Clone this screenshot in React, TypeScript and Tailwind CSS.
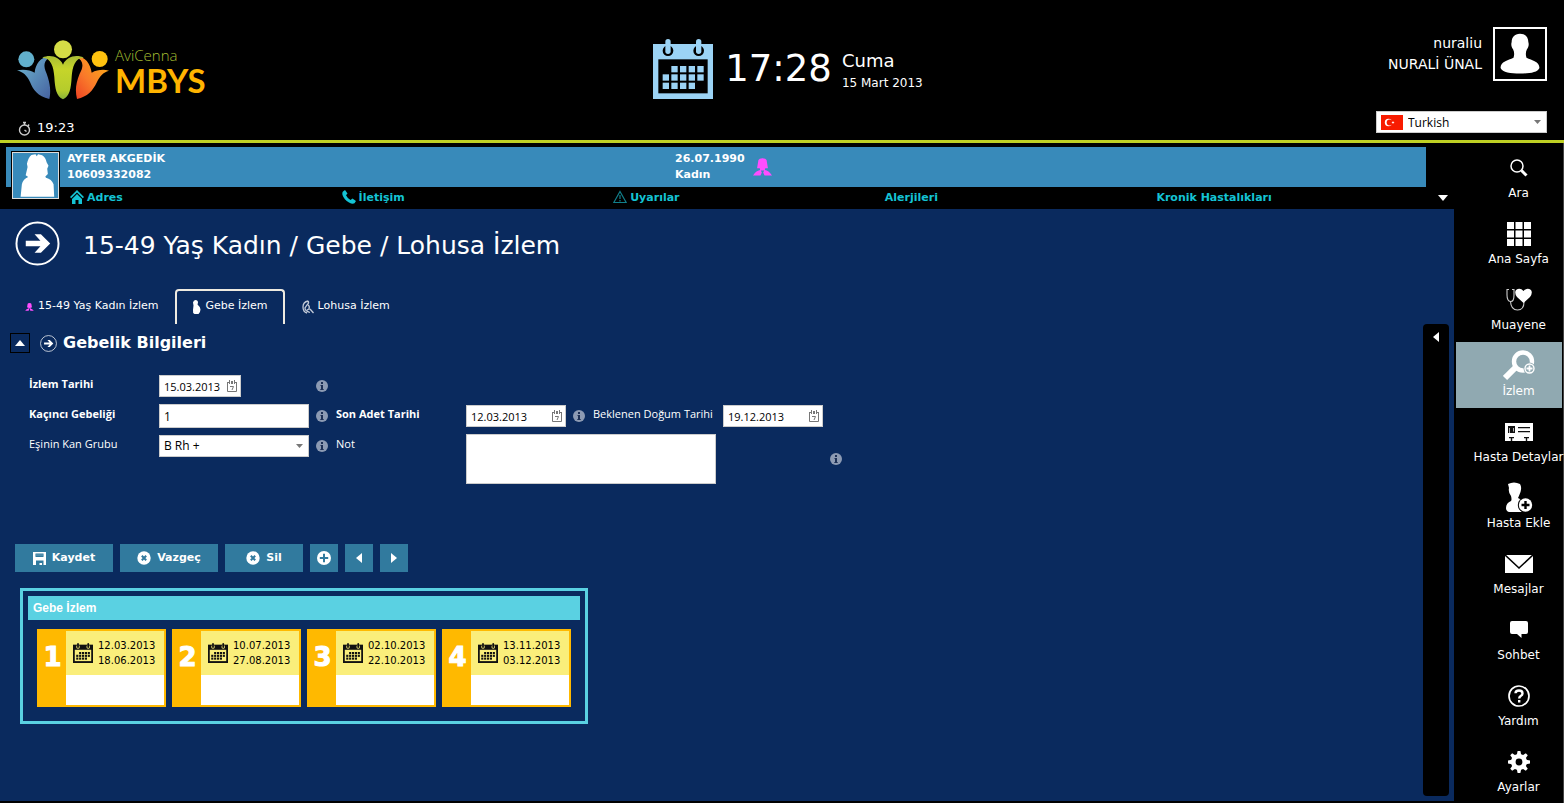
import React from 'react';

type IconProps = { className?: string };

function CalendarIcon({ fg, bg, className }: { fg: string; bg: string; className?: string }) {
  const rows = [
    [127, 153, 179, 205],
    [101, 127, 153, 179, 205],
    [101, 127, 153, 179],
  ];
  return (
    <svg viewBox="72 57 180 180" className={className} aria-hidden="true">
      <rect x="72" y="72" width="180" height="165" fill={fg} />
      <rect x="88" y="118" width="148" height="102" fill={bg} />
      {[117, 209].map((x) => (
        <g key={x}>
          <circle cx={x} cy="92" r="16" fill={bg} />
          <rect x={x - 8} y="57" width="16" height="45" rx="8" fill={fg} />
        </g>
      ))}
      {rows.map((xs, r) =>
        xs.map((x) => <rect key={`${r}-${x}`} x={x} y={138 + r * 25} width="19" height="19" fill={fg} />),
      )}
    </svg>
  );
}

function LogoMark() {
  return (
    <svg viewBox="50 60 276 178" className="h-[60px] w-[92px]" aria-hidden="true">
      <defs>
        <linearGradient id="lb" x1="0" y1="0" x2="1" y2="1">
          <stop offset="0" stopColor="#6fb9d2" />
          <stop offset="1" stopColor="#4662a0" />
        </linearGradient>
        <linearGradient id="lg" x1="0" y1="0" x2="0" y2="1">
          <stop offset="0" stopColor="#a9bd35" />
          <stop offset=".3" stopColor="#c6d52a" />
          <stop offset=".8" stopColor="#b5cc2c" />
          <stop offset="1" stopColor="#86b23a" />
        </linearGradient>
        <linearGradient id="lo" x1="1" y1="0" x2="0" y2="1">
          <stop offset="0" stopColor="#fdb515" />
          <stop offset=".6" stopColor="#f9792a" />
          <stop offset="1" stopColor="#ee4223" />
        </linearGradient>
      </defs>
      <path d="M50 150C70 146 90 149 103 157 105 130 122 107 150 109 130 122 128 135 139 160 150 190 152 215 147 236 112 228 98 208 89 185 81 166 68 155 50 150Z" fill="url(#lb)" />
      <path d="M228 109C252 107 270 128 274 157 290 149 308 146 326 151 308 156 298 168 290 185 277 212 262 229 230 236 224 210 226 190 238 160 252 135 248 120 228 109Z" fill="url(#lo)" />
      <path d="M126 112C150 101 178 110 188 133 198 110 226 101 250 112 224 112 216 140 214 170 212 205 208 228 188 237 168 228 164 205 162 170 160 140 152 112 126 112Z" fill="url(#lg)" />
      <circle cx="78" cy="117" r="24" fill="#62b0cc" />
      <circle cx="188" cy="87" r="27" fill="#d5dc46" />
      <circle cx="298" cy="116" r="24" fill="#ffc20f" />
    </svg>
  );
}

function WomanIcon({ className }: IconProps) {
  return (
    <svg viewBox="0 0 56 52" className={className} fill="#ff4dff" aria-hidden="true">
      <path d="M16 5Q18 0 28 0T40 5L44 30H36L35 35Q46 36 56 51H34L30 42 33 36H23L26 42 22 51H0Q8 38 21 35L20 30H12Z" />
    </svg>
  );
}

function ArrowCircle({ className, thin }: IconProps & { thin?: boolean }) {
  return (
    <svg viewBox="0 0 46 46" className={className} aria-hidden="true">
      <circle cx="23" cy="23" r="21.5" fill="none" stroke="#fff" strokeWidth={thin ? 2.6 : 2} opacity={thin ? 0.75 : 1} />
      <path d="M11 20.300H26L20 13.500H26.500L36 23 26.500 32.500H20L26 25.700H11Z" fill="#fff" />
    </svg>
  );
}

function InfoIcon() {
  return (
    <svg viewBox="0 0 12 12" className="size-3" role="img" aria-label="Bilgi">
      <circle cx="6" cy="6" r="6" fill="#8c9ab3" />
      <path d="M5 2h2v2H5zM4.500 5H7v4h.7v1H4.300V9H5V6h-.5z" fill="#1c2f55" />
    </svg>
  );
}

function Triangle({ dir, className }: { dir: 'left' | 'right' | 'up' | 'down'; className?: string }) {
  const d = {
    left: 'M10 0V12L0 6Z',
    right: 'M0 0V12L10 6Z',
    up: 'M0 10H12L6 0Z',
    down: 'M0 0H12L6 10Z',
  }[dir];
  const box = dir === 'left' || dir === 'right' ? '0 0 10 12' : '0 0 12 10';
  return (
    <svg viewBox={box} preserveAspectRatio="none" className={className} fill="currentColor" aria-hidden="true">
      <path d={d} />
    </svg>
  );
}

function DatePickerIcon({ className }: IconProps) {
  return (
    <svg viewBox="0 0 10 12" className={className} fill="none" stroke="#777" aria-hidden="true">
      <path d="M0 2.500H2M8 2.500H10M.5 2.500V11.500H9.500V2.500M2.500 0V4M7.500 0V4M4.500 1V4M5.500 1V4M3 6.500H6.500L5 10" />
    </svg>
  );
}

function XCircle() {
  return (
    <svg viewBox="0 0 14 14" className="size-[14px]" aria-hidden="true">
      <circle cx="7" cy="7" r="6.7" fill="#fff" />
      <path d="M4.800 4.800l4.400 4.400M9.200 4.800L4.800 9.200" stroke="#317a9e" strokeWidth="2" />
    </svg>
  );
}

function Header() {
  return (
    <header className="border-b-[3px] border-[#bfd124] pt-[27px]">
      <div className="grid h-[84px] grid-cols-[1fr_auto_1fr] items-start px-[17px]">
        <div className="flex pt-[13px]">
          <LogoMark />
          <div className="flex flex-col pl-[6px] pt-[5px]">
            <span className="font-['Open_Sans',sans-serif] text-[15px] font-light leading-[20px] text-[#a3bd31]">AviCenna</span>
            <span className="font-['Lato',sans-serif] text-[33px] font-bold leading-[30px] text-[#ffb400]">MBYS</span>
          </div>
        </div>
        <div className="flex items-center pl-3 pt-[12px]">
          <CalendarIcon fg="#9bd3f5" bg="#000" className="size-[60px]" />
          <time className="pl-3 text-[37px] leading-[60px]">17:28</time>
          <div className="flex flex-col pl-[10px] pt-[6px]">
            <span className="text-[18px] leading-[22px]">Cuma</span>
            <span className="text-[12px] leading-[22px]">15 Mart 2013</span>
          </div>
        </div>
        <div className="flex justify-end gap-[11px]">
          <div className="flex flex-col pt-[6px] text-right text-[14px] leading-[21px]">
            <span>nuraliu</span>
            <span>NURALİ ÜNAL</span>
          </div>
          <svg viewBox="0 0 54 54" className="size-[54px] border-2 border-white" aria-hidden="true">
            <path d="M27 5C33 5 36 9 36 14 37 17 36 20 34.500 22 33 25 33 28 34 31 40 34 48 35 48 42 46 47 37 48 27 48S8 47 6 42C6 35 14 34 20 31 21 28 21 25 19.500 22 18 20 17 17 18 14 18 9 21 5 27 5Z" fill="#fff" />
          </svg>
        </div>
      </div>
      <div className="flex h-[29px] items-start justify-between px-[17px]">
        <div className="flex items-center gap-[5px] pt-[7px] text-[13px] leading-[20px]">
          <svg viewBox="0 0 15 15" className="size-[15px]" fill="none" stroke="#ccc" aria-hidden="true">
            <circle cx="7.500" cy="9" r="5" strokeWidth="1.400" />
            <path d="M7.500 1V4M6 1.500H9M12 3.500L11 5M7.500 9L9.500 10.500" strokeWidth="1.500" />
          </svg>
          <span>19:23</span>
        </div>
        <div className="relative flex h-[22px] w-[171px] items-center border border-[#ccc] bg-white pl-1">
          <svg viewBox="0 0 22 15" className="h-[15px] w-[22px]" aria-hidden="true">
            <rect width="22" height="15" fill="#f81b00" />
            <circle cx="7.500" cy="7.500" r="3.700" fill="#fff" />
            <circle cx="8.700" cy="7.500" r="3" fill="#f81b00" />
            <path d="M10.500 7.500l1-.5.500-1 .5 1 1 .5-1 .5-.5 1-.5-1z" fill="#fff" />
          </svg>
          <select aria-label="Dil" className="flex-1 appearance-none bg-transparent pl-[5px] pt-px font-['Open_Sans',sans-serif] text-[12px] leading-[18px] text-black">
            <option>Turkish</option>
          </select>
          <Triangle dir="down" className="pointer-events-none absolute right-[5px] top-[8px] h-1 w-[7px] text-[#777]" />
        </div>
      </div>
    </header>
  );
}

const infoLinks = [
  {
    label: 'Adres',
    icon: (
      <svg viewBox="0 0 14 14" className="size-[14px]" fill="#14c3d4" aria-hidden="true">
        <path d="M7 0L14 7 12.800 8.200 7 2.500 1.200 8.200 0 7ZM7 4L12 9V14H8.500V10H5.500V14H2V9Z" />
      </svg>
    ),
  },
  {
    label: 'İletişim',
    icon: (
      <svg viewBox="0 0 14 14" className="size-[14px]" fill="#14c3d4" aria-hidden="true">
        <path d="M1 1.500L3 0 5.500 3.500 4 5.300Q5.500 8.500 8.500 10L10.500 8.500 14 11 12.500 13.300Q10.500 14.500 7 12.500 2 9.500.500 5 0 2.500 1 1.500Z" />
      </svg>
    ),
  },
  {
    label: 'Uyarılar',
    icon: (
      <svg viewBox="0 0 14 14" className="size-[14px]" fill="none" stroke="#117f8b" aria-hidden="true">
        <path d="M7 1.500L13.200 12.500H.8ZM7 5V9M7 10V11.500" strokeWidth="1.200" />
      </svg>
    ),
  },
  { label: 'Alerjileri', icon: null },
  { label: 'Kronik Hastalıkları', icon: null },
];

function PatientBar() {
  return (
    <section className="relative bg-black pl-[6px] pt-1 text-[11px] font-bold">
      <div className="mr-7 grid h-10 grid-cols-[608px_1fr] items-center bg-[#388aba] pl-[61px] leading-4">
        <div>
          <p>AYFER AKGEDİK</p>
          <p>10609332082</p>
        </div>
        <div className="flex items-center gap-2">
          <div>
            <p>26.07.1990</p>
            <p>Kadın</p>
          </div>
          <WomanIcon className="h-[18px] w-[19px]" />
        </div>
      </div>
      <div className="absolute left-[11px] top-2 border border-black">
        <svg viewBox="34 397 142 140" className="size-[47px] border border-[#ddd] bg-[#388aba]" aria-hidden="true">
          <path d="M92 402L105 400 109 406 113 400 126 403Q137 410 140 425L146 436 142 446 144 462 136 470 138 474Q156 478 162 495L164 534H58L62 495Q66 478 82 472L74 466 80 440 78 430Q82 410 92 402Z" fill="#fff" />
        </svg>
      </div>
      <div className="flex h-[22px] items-center pl-16">
        <nav className="grid flex-1 grid-cols-5 text-[#14c3d4]">
          {infoLinks.map((l) => (
            <a key={l.label} href="#" className="flex items-center gap-[3px] leading-5 [&>svg]:mb-[2px]">
              {l.icon}
              {l.label}
            </a>
          ))}
        </nav>
        <button type="button" aria-label="Genişlet" className="pl-[10px] pr-[6px]">
          <Triangle dir="down" className="h-[6px] w-[10px]" />
        </button>
      </div>
    </section>
  );
}

const tabs = [
  { label: '15-49 Yaş Kadın İzlem', icon: <WomanIcon className="h-2 w-[9px]" /> },
  {
    label: 'Gebe İzlem',
    active: true,
    icon: (
      <svg viewBox="0 0 8 14" className="h-[14px] w-[9px]" fill="#fff" aria-hidden="true">
        <path d="M3 0Q5.500 0 5.500 2.500L5 4.500Q8 7 8 9.500T6 14H2Q0 13 .5 10L1 5.500.5 2.500Q1 0 3 0Z" />
      </svg>
    ),
  },
  {
    label: 'Lohusa İzlem',
    icon: (
      <svg viewBox="0 0 12 14" className="h-[14px] w-3" fill="none" stroke="#c2cad8" aria-hidden="true">
        <path d="M6 1Q1 2 1 7T5 13M6 1Q7.500 3 5 5L3 8Q3 11 8 12.500M6 5Q8 6 7 9L5 10M8 9L11.500 13" strokeWidth="1.300" />
      </svg>
    ),
  },
];

const labelBase = 'pb-[5px] leading-4';
const fieldBox = "border border-[#ccc] bg-white font-['Open_Sans',sans-serif] text-black";

function DateField({ id, value, wide }: { id: string; value: string; wide?: boolean }) {
  return (
    <div className={wide ? 'relative w-[100px]' : 'relative w-[82px]'}>
      <input id={id} defaultValue={value} className={`block h-[22px] w-full pl-1 text-[11px] ${fieldBox}`} />
      <DatePickerIcon className="pointer-events-none absolute right-1 top-[5px] h-3 w-[10px]" />
    </div>
  );
}

function FormGrid() {
  return (
    <form className="grid grid-cols-[130px_150px_27px_130px_100px_27px_130px_100px_27px] grid-rows-[30px_30px_30px_26px] items-center pl-[29px] pt-[17px] font-['Open_Sans',sans-serif] text-[11px]">
      <label htmlFor="izlem" className={`${labelBase} font-bold`}>İzlem Tarihi</label>
      <DateField id="izlem" value="15.03.2013" />
      <div className="col-span-7 pl-[7px]"><InfoIcon /></div>

      <label htmlFor="gebelik" className={`${labelBase} font-bold`}>Kaçıncı Gebeliği</label>
      <input id="gebelik" defaultValue="1" className={`h-6 w-full pl-1 text-[12px] ${fieldBox}`} />
      <div className="pl-[7px]"><InfoIcon /></div>
      <label htmlFor="adet" className={`${labelBase} font-bold`}>Son Adet Tarihi</label>
      <DateField id="adet" value="12.03.2013" wide />
      <div className="pl-[7px]"><InfoIcon /></div>
      <label htmlFor="dogum" className={`${labelBase} whitespace-nowrap`}>Beklenen Doğum Tarihi</label>
      <DateField id="dogum" value="19.12.2013" wide />
      <span />

      <label htmlFor="kan" className={labelBase}>Eşinin Kan Grubu</label>
      <div className="relative">
        <select id="kan" className={`block h-[22px] w-full appearance-none pl-1 text-[12px] ${fieldBox}`}>
          <option>B Rh +</option>
        </select>
        <Triangle dir="down" className="pointer-events-none absolute right-[6px] top-[9px] h-1 w-[7px] text-[#777]" />
      </div>
      <div className="pl-[7px]"><InfoIcon /></div>
      <label htmlFor="not" className={labelBase}>Not</label>
      <textarea id="not" className={`col-span-4 row-span-2 h-[50px] w-[250px] resize-none text-[12px] ${fieldBox}`} />
      <div className="row-span-2 pl-[7px]"><InfoIcon /></div>
    </form>
  );
}

const btn = 'flex h-7 items-center justify-center bg-[#317a9e] text-[11px] font-bold';

function Toolbar() {
  return (
    <div className="flex gap-[7px] pl-[15px] pt-[57px]">
      <button type="button" className={`${btn} w-[98px] gap-[6px]`}>
        <svg viewBox="0 0 13 13" className="size-[13px]" aria-hidden="true">
          <path d="M0 0H13V13H0Z" fill="#fff" />
          <path d="M2.500 1.500H10.500V5H2.500ZM3 8.500H10.500V13H9V11H6.500V13H3Z" fill="#317a9e" />
          <path d="M2.500 2.500H10.500V3.500H2.500Z" fill="#6ba0ba" />
        </svg>
        Kaydet
      </button>
      <button type="button" className={`${btn} w-[98px] gap-[6px]`}><XCircle />Vazgeç</button>
      <button type="button" className={`${btn} w-[78px] gap-[6px]`}><XCircle />Sil</button>
      <button type="button" aria-label="Ekle" className={`${btn} w-7`}>
        <svg viewBox="0 0 14 14" className="size-[14px]" aria-hidden="true">
          <circle cx="7" cy="7" r="7" fill="#fff" />
          <path d="M7 2.800V11.200M2.800 7H11.200" stroke="#317a9e" strokeWidth="2" />
        </svg>
      </button>
      <button type="button" aria-label="Önceki" className={`${btn} w-7`}><Triangle dir="left" className="h-[10px] w-[6px]" /></button>
      <button type="button" aria-label="Sonraki" className={`${btn} w-7`}><Triangle dir="right" className="h-[10px] w-[6px]" /></button>
    </div>
  );
}

const visits = [
  ['12.03.2013', '18.06.2013'],
  ['10.07.2013', '27.08.2013'],
  ['02.10.2013', '22.10.2013'],
  ['13.11.2013', '03.12.2013'],
];

function VisitPanel() {
  return (
    <section className="ml-5 mt-4 w-[568px] border-[3px] border-[#5ad1e2] p-[5px] pb-[14px]">
      <h3 className="bg-[#5ad1e2] pl-[5px] font-['Liberation_Sans',sans-serif] text-[12px] font-bold leading-6">Gebe İzlem</h3>
      <ol className="flex gap-[6px] pl-[9px] pt-[9px]">
        {visits.map(([from, to], i) => (
          <li key={from} className="flex h-[78px] w-[129px] border-2 border-[#ffb900] bg-[#ffb900]">
            <span className="w-[27px] pt-[10px] text-center text-[26px] font-bold leading-8 [-webkit-text-stroke:1px_white]">{i + 1}</span>
            <div className="flex-1 bg-white">
              <div className="flex h-11 items-center bg-[#faee7b] pl-[7px]">
                <CalendarIcon fg="#111" bg="#faee7b" className="size-5" />
                <p className="pl-[5px] text-[10px] leading-[15px] text-black">
                  {from}
                  <br />
                  {to}
                </p>
              </div>
            </div>
          </li>
        ))}
      </ol>
    </section>
  );
}

const sideItems: { label: string; icon: React.ReactNode; active?: boolean }[] = [
  {
    label: 'Ara',
    icon: (
      <svg viewBox="0 0 18 18" className="size-[18px]" fill="none" stroke="#fff" aria-hidden="true">
        <circle cx="7" cy="7" r="6" strokeWidth="1.500" />
        <path d="M11.500 11.500L16.500 16.500" strokeWidth="3" />
      </svg>
    ),
  },
  {
    label: 'Ana Sayfa',
    icon: (
      <svg viewBox="0 0 24 24" className="size-6" fill="#fff" aria-hidden="true">
        {[0, 8.5, 17].map((y) => [0, 8.5, 17].map((x) => <rect key={`${x}-${y}`} x={x} y={y} width="7" height="7" />))}
      </svg>
    ),
  },
  {
    label: 'Muayene',
    icon: (
      <svg viewBox="0 0 26 23" className="h-[23px] w-[26px]" aria-hidden="true">
        <path d="M3 1.500H1V7Q1 13 4.500 13.500T8 7V1.500H6M4.500 13.500Q5 22 11.500 22T18 14" fill="none" stroke="#ccc" strokeWidth="1.100" />
        <path d="M17.500 15L11 9Q8 5 10 2 14-1 17.500 3 21-1 25 2 27 5 24 9Z" fill="#fff" />
      </svg>
    ),
  },
  {
    label: 'İzlem',
    active: true,
    icon: (
      <svg viewBox="0 0 32 31" className="h-[31px] w-8" aria-hidden="true">
        <circle cx="20" cy="11.500" r="9" fill="none" stroke="#fff" strokeWidth="4.400" />
        <path d="M13 17L2 28" stroke="#fff" strokeWidth="6" />
        <circle cx="26.500" cy="18.500" r="6" fill="#90a9b1" />
        <circle cx="26.500" cy="18.500" r="4.500" fill="none" stroke="#fff" strokeWidth="1.400" />
        <path d="M26.500 15.500V21.500M23.500 18.500H29.500" stroke="#fff" strokeWidth="1.800" />
      </svg>
    ),
  },
  {
    label: 'Hasta Detaylar',
    icon: (
      <svg viewBox="0 0 28 18" className="h-[18px] w-7" aria-hidden="true">
        <rect width="28" height="18" fill="#fff" />
        <path d="M3 3H10V10H8V8.500H9V5H8.300V10H4.700V5H4V10H3ZM13 4H25V5.300H13ZM13 8H25V9.300H13ZM4 14H9V15.200H7.200V18H5.800V15.200H4ZM19 14H24V15.200H22.200V18H20.800V15.200H19Z" fill="#111" />
      </svg>
    ),
  },
  {
    label: 'Hasta Ekle',
    icon: (
      <svg viewBox="0 0 28 31" className="h-[31px] w-7" aria-hidden="true">
        <path d="M3 2Q9-1 15 2 17 5 15.500 10 14 14 13 16L24 22 16 30H4Q1 29 1 26 1 21 6 19 7 18 6 14 3 10 4 6Z" fill="#fff" />
        <circle cx="20.500" cy="23" r="7.700" fill="#000" />
        <circle cx="20.500" cy="23" r="6.700" fill="#fff" />
        <path d="M20.500 19V27M16.500 23H24.500" stroke="#000" strokeWidth="2.400" />
      </svg>
    ),
  },
  {
    label: 'Mesajlar',
    icon: (
      <svg viewBox="0 0 28 18" className="h-[18px] w-7" aria-hidden="true">
        <rect width="28" height="18" fill="#fff" />
        <path d="M0 0L14 13 28 0" fill="none" stroke="#000" strokeWidth="1.600" />
      </svg>
    ),
  },
  {
    label: 'Sohbet',
    icon: (
      <svg viewBox="0 0 18 17" className="h-[17px] w-[18px]" fill="#fff" aria-hidden="true">
        <path d="M2 0H16Q18 0 18 2V11Q18 13 16 13H11.500V17L7 13H2Q0 13 0 11V2Q0 0 2 0Z" />
      </svg>
    ),
  },
  {
    label: 'Yardım',
    icon: (
      <svg viewBox="0 0 22 22" className="size-[22px]" fill="none" stroke="#fff" aria-hidden="true">
        <circle cx="11" cy="11" r="10" strokeWidth="1.700" />
        <path d="M7.500 8.300Q7.500 5.500 11 5.500T14.500 8.500Q14.500 10 12.700 11 11.200 12 11.200 13.500M11.200 15V17.500" strokeWidth="2.400" />
      </svg>
    ),
  },
  {
    label: 'Ayarlar',
    icon: (
      <svg viewBox="0 0 22 22" className="size-[22px]" aria-hidden="true">
        <circle cx="11" cy="11" r="5.700" fill="none" stroke="#fff" strokeWidth="4.600" />
        {[0, 45, 90, 135, 180, 225, 270, 315].map((a) => (
          <path key={a} d="M8.800 4L9.600 0H12.400L13.200 4Z" fill="#fff" transform={`rotate(${a} 11 11)`} />
        ))}
      </svg>
    ),
  },
];

function Sidebar() {
  return (
    <nav className="w-[110px] shrink-0 border-r border-[#444] bg-black pl-[2px] pr-px pt-px">
      <ul>
        {sideItems.map((s) => (
          <li key={s.label} className="h-[66px] last:h-[65px]">
            <a
              href="#"
              className={
                s.active
                  ? 'flex h-full flex-col items-center bg-[#90a9b1] pl-[19px] pt-2'
                  : 'flex h-full flex-col items-center pl-[19px] pt-2'
              }
            >
              <span className="flex h-[31px] items-center">{s.icon}</span>
              <span className="whitespace-nowrap text-[12px] leading-5">{s.label}</span>
            </a>
          </li>
        ))}
      </ul>
    </nav>
  );
}

export default function App() {
  return (
    <div className="flex min-h-screen flex-col bg-black font-['DejaVu_Sans',sans-serif] text-white">
      <Header />
      <div className="flex flex-1">
        <div className="flex min-w-0 flex-1 flex-col">
          <PatientBar />
          <div className="mb-[2px] flex flex-1 bg-[#0a2a5e] pr-[5px]">
            <main className="min-w-0 flex-1">
              <div className="flex items-center gap-[23px] pl-[15px] pt-3">
                <ArrowCircle className="size-[45px]" />
                <h1 className="pt-1 text-[25px] leading-[41px]">15-49 Yaş Kadın / Gebe / Lohusa İzlem</h1>
              </div>
              <div role="tablist" className="flex pl-2 pt-[23px] text-[11px]">
                {tabs.map((t) => (
                  <button
                    key={t.label}
                    type="button"
                    role="tab"
                    aria-selected={!!t.active}
                    className={
                      t.active
                        ? 'flex h-[35px] items-center gap-1 rounded-t border-2 border-b-0 border-[#eeeae0] px-[15px] pb-[2px]'
                        : 'flex h-[35px] items-center gap-1 border-2 border-b-0 border-transparent px-[15px] pb-[2px]'
                    }
                  >
                    {t.icon}
                    {t.label}
                  </button>
                ))}
              </div>
              <div className="flex items-center pl-[10px] pt-2">
                <button type="button" aria-label="Daralt" className="flex size-5 items-center justify-center border border-black">
                  <Triangle dir="up" className="h-[6px] w-[10px]" />
                </button>
                <ArrowCircle thin className="ml-[10px] size-[17px]" />
                <h2 className="pl-[6px] text-[16px] font-bold leading-[22px]">Gebelik Bilgileri</h2>
              </div>
              <FormGrid />
              <Toolbar />
              <VisitPanel />
            </main>
            <aside className="mb-[5px] mt-[115px] flex w-[26px] justify-center rounded bg-black pt-2">
              <button type="button" aria-label="Paneli aç" className="h-[10px]">
                <Triangle dir="left" className="h-[10px] w-[6px]" />
              </button>
            </aside>
          </div>
        </div>
        <Sidebar />
      </div>
    </div>
  );
}
